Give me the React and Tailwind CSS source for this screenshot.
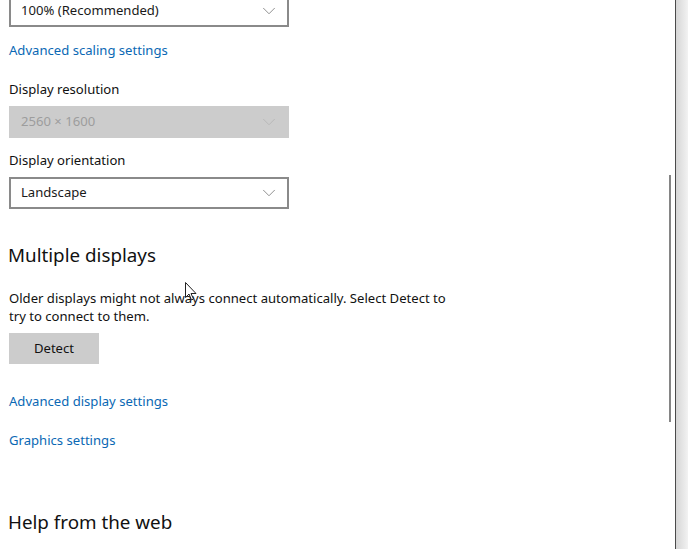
import { ChevronDown } from 'lucide-react';

const font = { fontFamily: '"Segoe UI", "Noto Sans", "Liberation Sans", sans-serif' };

function Dropdown({ value, disabled }) {
  return (
    <div
      className={
        disabled
          ? 'flex items-center justify-between w-[280px] h-[32px] pl-[12px] pr-[9px] bg-[#cccccc] text-[#9d9d9d]'
          : 'flex items-center justify-between w-[280px] h-[32px] pl-[10px] pr-[7px] border-2 border-[#8a8a8a] bg-white text-[#1a1a1a]'
      }
    >
      <span className="text-[13.1px] leading-none">{value}</span>
      <ChevronDown size={22} strokeWidth={0.9} className={disabled ? 'text-[#b4b4b4]' : 'text-[#7a7a7a]'} />
    </div>
  );
}

function Link({ children, className = '' }) {
  return <a className={`block text-[13.1px] leading-[20px] text-[#0a68b4] ${className}`}>{children}</a>;
}

export default function App() {
  return (
    <div className="relative w-[688px] h-[549px] overflow-hidden bg-white" style={font}>
      <div className="flex h-full">
        <div className="flex-1 pl-[9px] text-[#111]">
          <div className="-mt-[5px]">
            <Dropdown value="100% (Recommended)" />
          </div>
          <Link className="mt-[13px]">Advanced scaling settings</Link>
          <p className="mt-[19px] text-[13.1px] leading-[20px]">Display resolution</p>
          <div className="mt-[7px]">
            <Dropdown value="2560 × 1600" disabled />
          </div>
          <p className="mt-[12px] text-[13.1px] leading-[20px]">Display orientation</p>
          <div className="mt-[7px]">
            <Dropdown value="Landscape" />
          </div>

          <h2 className="-ml-[1px] mt-[32px] text-[18.8px] leading-[28px] text-[#111]">Multiple displays</h2>

          <p className="mt-[20px] w-[455px] text-[13.1px] leading-[18px]">
            Older displays might not always connect automatically. Select Detect to try to connect to them.
          </p>
          <button className="mt-[8px] w-[90px] h-[31px] bg-[#cccccc] text-[13.1px] text-[#111]">Detect</button>

          <Link className="mt-[27px]">Advanced display settings</Link>
          <Link className="mt-[19px]">Graphics settings</Link>

          <h2 className="-ml-[1px] mt-[58px] text-[18.8px] leading-[28px] text-[#111]">Help from the web</h2>
        </div>

        {/* scrollbar */}
        <div className="w-[13px] relative">
          <div className="absolute left-[7px] top-[175px] w-[2px] h-[247px] bg-[#858585]" />
        </div>
        {/* window edge */}
        <div className="w-[1px] bg-[#4a4a4a]" />
        <div className="w-[12px] bg-gradient-to-r from-[#d6d6d6] to-[#f2f2f2]" />
      </div>

      {/* mouse pointer */}
      <svg className="absolute left-[185px] top-[282px]" width="12" height="19" viewBox="0 0 12 19">
        <path d="M0.5 0.5 L0.5 15.5 L4 12 L6.5 18 L8.5 17 L6 11.5 L11 11.5 Z" fill="white" stroke="#222" strokeWidth="1" />
      </svg>
    </div>
  );
}
